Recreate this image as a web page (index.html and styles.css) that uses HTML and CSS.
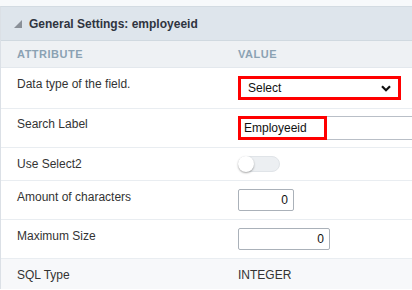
FILE: index.html
```html
<!DOCTYPE html>
<html lang="en">
<head>
  <meta charset="UTF-8">
  <title>General Settings</title>
  <link rel="stylesheet" href="styles.css">
</head>
<body>
<div class="top-strip"></div>
<div class="panel">
  <div class="panel-head">
    <span class="caret"></span>
    <span>General Settings: employeeid</span>
  </div>

  <div class="grid-head">
    <div>Attribute</div>
    <div>Value</div>
  </div>

  <div class="row">
    <div class="label">Data type of the field.</div>
    <div class="value">
      <div class="select marked">
        <span>Select</span>
        <svg class="chevron" width="10" height="7" viewBox="0 0 10 7">
          <path d="M1 1.2 L5 5.2 L9 1.2" fill="none" stroke="#111" stroke-width="2.2"/>
        </svg>
      </div>
    </div>
  </div>

  <div class="row row-tight">
    <div class="label">Search Label</div>
    <div class="value">
      <div class="text-field">
        <input type="text" value="Employeeid">
        <div class="mark-box"></div>
      </div>
    </div>
  </div>

  <div class="row">
    <div class="label">Use Select2</div>
    <div class="value">
      <div class="toggle"><span class="knob"></span></div>
    </div>
  </div>

  <div class="row">
    <div class="label">Amount of characters</div>
    <div class="value">
      <input class="num small" type="text" value="0">
    </div>
  </div>

  <div class="row">
    <div class="label">Maximum Size</div>
    <div class="value">
      <input class="num wide" type="text" value="0">
    </div>
  </div>

  <div class="row row-readonly">
    <div class="label">SQL Type</div>
    <div class="value plain">INTEGER</div>
  </div>
</div>
</body>
</html>
```

FILE: styles.css
```css
body {
  margin: 0;
  font-family: 'Liberation Sans', Arial, sans-serif;
  font-size: 12px;
  color: #333;
  background: #fff;
  overflow: hidden;
}
.top-strip {
  height: 6px;
  background: #f7f9fb;
}
.panel {
  border-top: 1px solid #d3dbe2;
  border-left: 1px solid #dbe0e6;
  overflow: hidden;
}
.panel-head {
  height: 33px;
  display: flex;
  align-items: center;
  gap: 7px;
  padding-left: 13px;
  background: #dee5ec;
  border-bottom: 1px solid #d0d9e0;
  font-weight: bold;
  color: #2f3440;
}
.caret {
  width: 0;
  height: 0;
  border-left: 8px solid transparent;
  border-bottom: 8px solid #8a9098;
  margin-top: 1px;
}
.grid-head {
  display: grid;
  grid-template-columns: 221px 1fr;
  padding-left: 16px;
  height: 26px;
  align-items: center;
  background: #eef1f4;
  border-bottom: 1px solid #e3e8ed;
  font-size: 11px;
  font-weight: bold;
  letter-spacing: 0.5px;
  text-transform: uppercase;
  color: #8ba2b3;
}
.row {
  display: grid;
  grid-template-columns: 221px 1fr;
  padding: 8px 0 8px 16px;
  border-bottom: 1px solid #e9edf1;
}
.row-tight {
  padding-top: 7px;
  padding-bottom: 7px;
}
.row-readonly {
  background: #f7f8fa;
  border-bottom: none;
  height: 14px;
}
.label {
  line-height: 14px;
  margin-top: 1px;
}
.value {
  min-width: 0;
}
.value.plain {
  line-height: 14px;
  margin-top: 1px;
}
.select {
  box-sizing: border-box;
  width: 163px;
  height: 24px;
  display: flex;
  align-items: center;
  justify-content: space-between;
  padding: 0 7px 0 7px;
  background: #fff;
  color: #111;
}
.marked {
  border: 3px solid #f00;
}
.chevron {
  display: block;
}
.text-field {
  position: relative;
  width: 200px;
}
.text-field input {
  box-sizing: border-box;
  width: 100%;
  height: 24px;
  border: 1px solid #b9bfc7;
  border-right: none;
  padding: 0 5px;
  font-family: inherit;
  font-size: 12px;
  color: #111;
  background: #fff;
}
.mark-box {
  position: absolute;
  left: 0;
  top: 0;
  width: 89px;
  height: 24px;
  box-sizing: border-box;
  border: 3px solid #f00;
}
.toggle {
  box-sizing: border-box;
  width: 42px;
  height: 16px;
  border-radius: 8px;
  background: #eceff2;
  border: 1px solid #e0e4e8;
  position: relative;
}
.knob {
  position: absolute;
  left: -1px;
  top: -1px;
  width: 16px;
  height: 16px;
  border-radius: 50%;
  background: #fff;
  box-shadow: 0 1px 2px rgba(0,0,0,0.35);
}
.num {
  box-sizing: border-box;
  height: 22px;
  border: 1px solid #aab1b9;
  border-radius: 2px;
  padding: 0 5px;
  text-align: right;
  font-family: inherit;
  font-size: 12px;
  color: #111;
  display: block;
}
.num.small {
  width: 56px;
}
.num.wide {
  width: 92px;
}
```
